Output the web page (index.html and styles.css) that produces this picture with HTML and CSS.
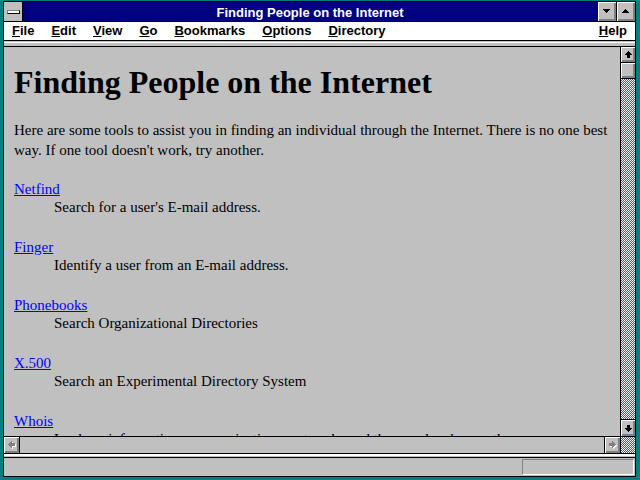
FILE: index.html
```html
<!DOCTYPE html>
<html lang="en">
<head>
    <meta charset="UTF-8">
    <title>Finding People on the Internet</title>
    <link rel="stylesheet" href="styles.css">
</head>
<body>
    <div class="window">
        <div class="inner">
            <div class="titlebar">
                <div class="sysmenu"><span class="sysbar"></span></div>
                <div class="title">Finding People on the Internet</div>
                <div class="tbtn">
                    <svg width="7" height="4" viewBox="0 0 7 4" shape-rendering="crispEdges"><path d="M0 0h7v1H0zM1 1h5v1H1zM2 2h3v1H2zM3 3h1v1H3z"/></svg>
                </div>
                <div class="tbtn">
                    <svg width="7" height="4" viewBox="0 0 7 4" shape-rendering="crispEdges"><path d="M3 0h1v1H3zM2 1h3v1H2zM1 2h5v1H1zM0 3h7v1H0z"/></svg>
                </div>
            </div>

            <div class="menubar">
                <span><u>F</u>ile</span>
                <span><u>E</u>dit</span>
                <span><u>V</u>iew</span>
                <span><u>G</u>o</span>
                <span><u>B</u>ookmarks</span>
                <span><u>O</u>ptions</span>
                <span><u>D</u>irectory</span>
                <span class="help"><u>H</u>elp</span>
            </div>
            <div class="strip"></div>

            <div class="main">
                <div class="left">
                    <div class="page">
                        <h1>Finding People on the Internet</h1>
                        <p>Here are some tools to assist you in finding an individual through the Internet. There is no one best way. If one tool doesn't work, try another.</p>
                        <dl>
                            <dt><a href="#">Netfind</a></dt>
                            <dd>Search for a user's E-mail address.</dd>
                            <dt><a href="#">Finger</a></dt>
                            <dd>Identify a user from an E-mail address.</dd>
                            <dt><a href="#">Phonebooks</a></dt>
                            <dd>Search Organizational Directories</dd>
                            <dt><a href="#">X.500</a></dt>
                            <dd>Search an Experimental Directory System</dd>
                            <dt><a href="#">Whois</a></dt>
                            <dd>Look up information on organizations, networks and the people who run them.</dd>
                        </dl>
                    </div>
                    <div class="hscroll">
                        <div class="hbtn hbtn-left">
                            <svg width="8" height="8" viewBox="0 0 8 8" shape-rendering="crispEdges">
                                <path fill="#fff" transform="translate(1 1)" d="M4 2h3v3H4zM3 0h1v7H3zM2 1h1v5H2zM1 2h1v3H1zM0 3h1v1H0z"/>
                                <path fill="#808080" d="M4 2h3v3H4zM3 0h1v7H3zM2 1h1v5H2zM1 2h1v3H1zM0 3h1v1H0z"/>
                            </svg>
                        </div>
                        <div class="htrack"></div>
                        <div class="hbtn hbtn-right">
                            <svg width="8" height="8" viewBox="0 0 8 8" shape-rendering="crispEdges">
                                <path fill="#fff" transform="translate(1 1)" d="M0 2h3v3H0zM3 0h1v7H3zM4 1h1v5H4zM5 2h1v3H5zM6 3h1v1H6z"/>
                                <path fill="#808080" d="M0 2h3v3H0zM3 0h1v7H3zM4 1h1v5H4zM5 2h1v3H5zM6 3h1v1H6z"/>
                            </svg>
                        </div>
                    </div>
                </div>
                <div class="vscroll">
                    <div class="vbtn vbtn-up">
                        <svg width="7" height="7" viewBox="0 0 7 7" shape-rendering="crispEdges"><path d="M3 0h1v1H3zM2 1h3v1H2zM1 2h5v1H1zM0 3h7v1H0zM2 4h3v3H2z"/></svg>
                    </div>
                    <div class="thumb"></div>
                    <div class="vtrack"></div>
                    <div class="vbtn vbtn-down">
                        <svg width="7" height="7" viewBox="0 0 7 7" shape-rendering="crispEdges"><path d="M2 0h3v3H2zM0 3h7v1H0zM1 4h5v1H1zM2 5h3v1H2zM3 6h1v1H3z"/></svg>
                    </div>
                    <div class="corner"></div>
                </div>
            </div>

            <div class="sep"></div>
            <div class="status">
                <div class="status-box"></div>
            </div>
        </div>
    </div>
</body>
</html>
```

FILE: styles.css
```css
* {
    margin: 0;
    padding: 0;
    box-sizing: border-box;
}
body {
    width: 640px;
    height: 480px;
    overflow: hidden;
    background-color: #008080;
}
.window {
    width: 640px;
    height: 480px;
    border-style: solid;
    border-color: #008080;
    border-width: 1px 4px 3px 3px;
}
.inner {
    height: 100%;
    border: 1px solid #000;
    display: flex;
    flex-direction: column;
    background-color: #c0c0c0;
}

/* title bar */
.titlebar {
    height: 20px;
    flex-shrink: 0;
    display: flex;
    background-color: #000080;
    border-bottom: 1px solid #000;
}
.sysmenu {
    width: 19px;
    background-color: #c0c0c0;
    border-right: 1px solid #000;
    display: flex;
    align-items: center;
    justify-content: center;
}
.sysbar {
    display: block;
    width: 13px;
    height: 4px;
    background-color: #fff;
    border: 1px solid #000;
    border-top-color: #808080;
    border-left-color: #808080;
}
.title {
    flex: 1;
    text-align: center;
    color: #fff;
    font-family: "Liberation Sans", Arial, sans-serif;
    font-weight: bold;
    font-size: 13px;
    line-height: 19px;
    padding-top: 1px;
}
.tbtn {
    width: 19px;
    border-left: 1px solid #000;
    background-color: #c0c0c0;
    box-shadow: inset 1px 1px #fff, inset -1px -1px #808080, inset -2px -2px #808080;
    display: flex;
    align-items: center;
    justify-content: center;
}
.tbtn svg {
    margin: 0 1px 1px 0;
}

/* menu */
.menubar {
    height: 19px;
    flex-shrink: 0;
    display: flex;
    background-color: #fff;
    border-bottom: 1px solid #000;
    font-family: "Liberation Sans", Arial, sans-serif;
    font-weight: bold;
    font-size: 13px;
    line-height: 18px;
    color: #000;
}
.menubar span {
    padding: 0 8px;
    margin-right: 1px;
}
.menubar .help {
    margin-left: auto;
    padding-right: 7px;
}
.strip {
    height: 6px;
    flex-shrink: 0;
    border-bottom: 1px solid #000;
    background: linear-gradient(#c0c0c0 1px, #fff 1px, #fff 2px, #c0c0c0 2px);
}

/* document area */
.main {
    flex: 1;
    min-height: 0;
    display: grid;
    grid-template-columns: 1fr 15px;
}
.left {
    display: flex;
    flex-direction: column;
    min-height: 0;
}
.page {
    flex: 1;
    overflow: hidden;
    padding: 17px 4px 0 10px;
    font-family: "Liberation Serif", "Times New Roman", serif;
    color: #000;
}
.page h1 {
    font-size: 32px;
    line-height: 36px;
    font-weight: bold;
}
.page p {
    margin-top: 20px;
    font-size: 15px;
    line-height: 20px;
}
.page dl {
    margin-top: 20px;
    font-size: 15px;
    line-height: 18px;
}
.page dd {
    margin: 0 0 22px 40px;
}
.page a {
    color: #0000ff;
    text-decoration: underline;
}

/* scroll bars */
.hscroll {
    height: 17px;
    flex-shrink: 0;
    display: flex;
    border-top: 1px solid #000;
}
.hbtn {
    width: 16px;
    background-color: #c0c0c0;
    display: flex;
    align-items: center;
    justify-content: center;
}
.hbtn-left {
    border-right: 1px solid #000;
    box-shadow: inset 1px 1px #fff, inset -1px -1px #808080, inset -2px -2px #808080;
}
.hbtn-right {
    border-left: 1px solid #000;
    box-shadow: inset 1px 1px #fff, inset -1px -1px #808080, inset -2px -2px #808080;
}
.htrack {
    flex: 1;
    background-color: #c0c0c0;
}
.vscroll {
    border-left: 1px solid #000;
    display: flex;
    flex-direction: column;
    min-height: 0;
}
.vbtn {
    background-color: #c0c0c0;
    box-shadow: inset 1px 1px #fff, inset -1px -1px #808080, inset -2px -2px #808080;
    display: flex;
    align-items: center;
    justify-content: center;
}
.vbtn-up {
    height: 16px;
    border-bottom: 1px solid #000;
}
.vbtn-down {
    height: 18px;
    border-top: 1px solid #000;
    border-bottom: 1px solid #000;
}
.thumb {
    height: 16px;
    background-color: #c0c0c0;
    border-bottom: 1px solid #000;
    box-shadow: inset 1px 1px #fff, inset -1px -1px #808080, inset -2px -2px #808080;
}
.vtrack, .corner {
    background: repeating-conic-gradient(#008080 0 25%, #fff 0 50%) 0 0 / 2px 2px;
}
.vtrack {
    flex: 1;
}
.corner {
    height: 16px;
}

/* status bar */
.sep {
    height: 5px;
    flex-shrink: 0;
    border-top: 1px solid #000;
    border-bottom: 1px solid #000;
    background: linear-gradient(#fff 2px, #c0c0c0 2px);
}
.status {
    height: 18px;
    flex-shrink: 0;
    display: flex;
    justify-content: flex-end;
    padding: 1px 1px 1px 0;
}
.status-box {
    width: 112px;
    height: 16px;
    border: 1px solid #fff;
    border-top-color: #808080;
    border-left-color: #808080;
}
```
